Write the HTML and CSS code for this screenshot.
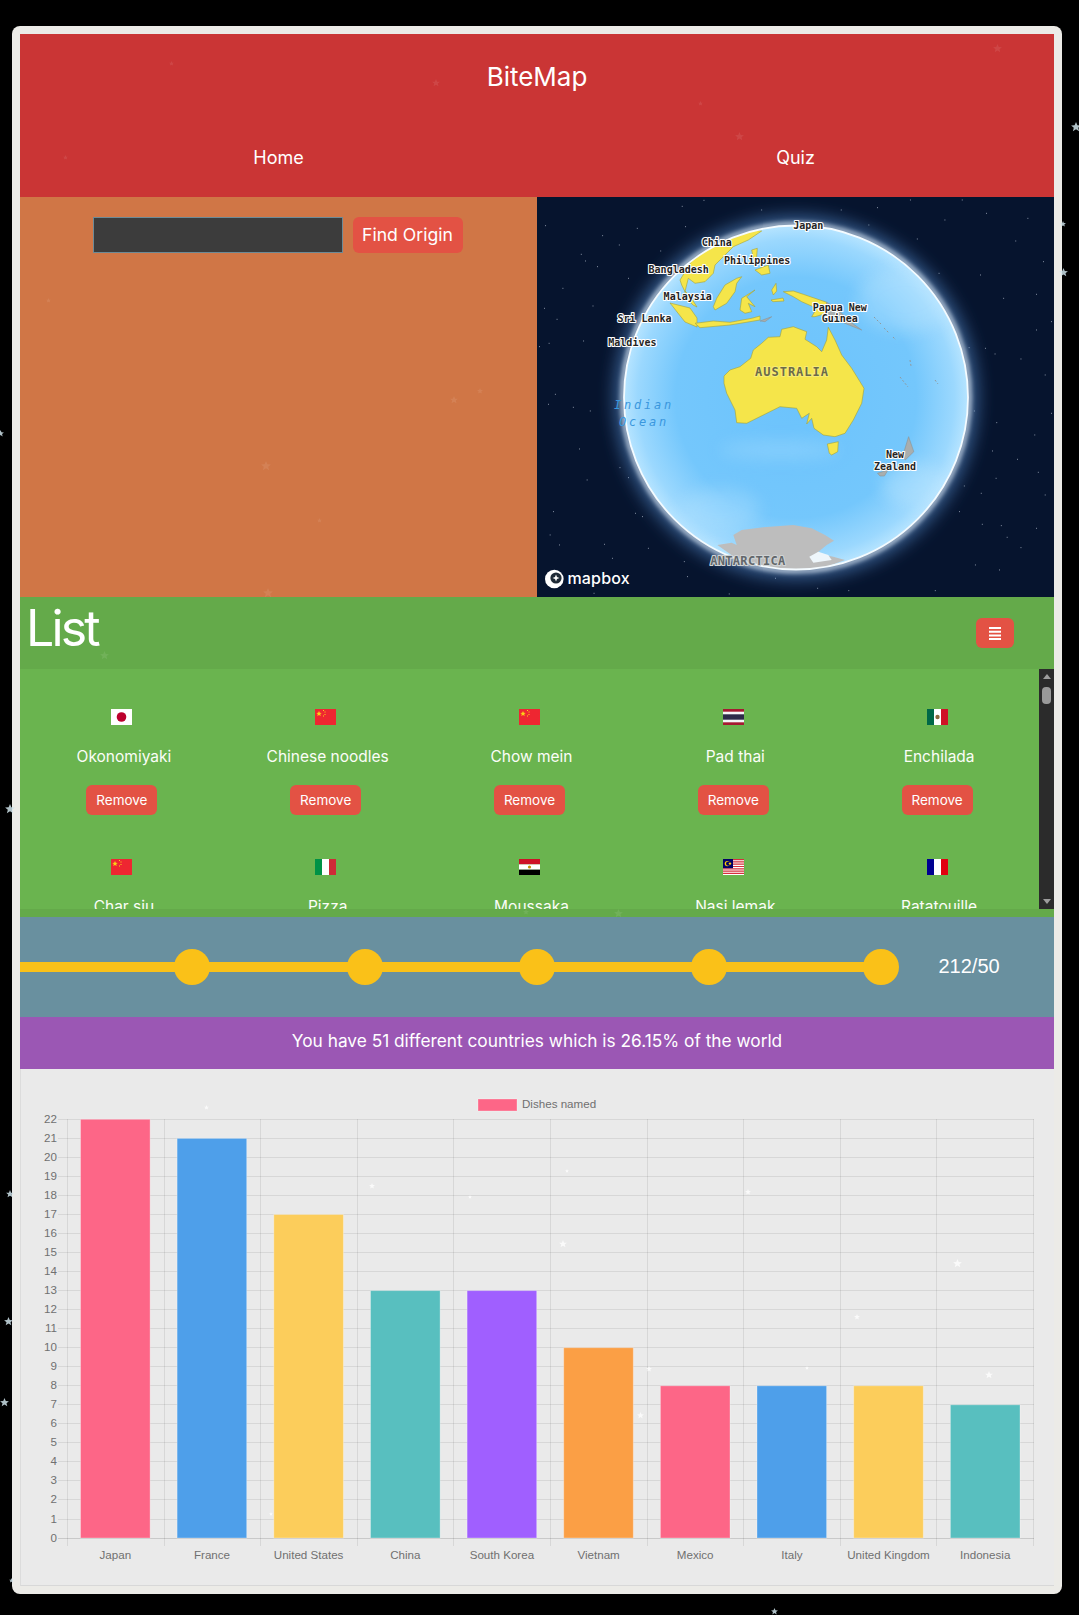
FILE: index.html
```html
<!DOCTYPE html>
<html lang="en">
<head>
<meta charset="utf-8">
<title>BiteMap</title>
<link rel="stylesheet" href="styles.css">
</head>
<body>
<svg class="defs" width="0" height="0" aria-hidden="true">
  <defs>
    <symbol id="f-jp" viewBox="0 0 21 16"><rect width="21" height="16" fill="#fff"/><circle cx="10.5" cy="8" r="4.8" fill="#bc002d"/></symbol>
    <symbol id="f-cn" viewBox="0 0 21 16"><rect width="21" height="16" fill="#ee2631"/><path d="M4 2l.8 1.8 1.9.1-1.5 1.2.5 1.9L4 6 2.300 7l.5-1.900L1.300 3.900l1.900-.1z" fill="#fcd116"/><path d="M8 1h1v1H8zM9.500 2.500h1v1h-1zM9.500 5h1v1h-1zM8 6.500h1v1H8z" fill="#fcd116"/></symbol>
    <symbol id="f-th" viewBox="0 0 21 16"><rect width="21" height="16" fill="#a51931"/><rect y="2.700" width="21" height="10.600" fill="#f4f5f8"/><rect y="5.300" width="21" height="5.400" fill="#2d2a4a"/></symbol>
    <symbol id="f-mx" viewBox="0 0 21 16"><rect width="7" height="16" fill="#006847"/><rect x="7" width="7" height="16" fill="#fff"/><rect x="14" width="7" height="16" fill="#ce1126"/><circle cx="10.500" cy="8" r="2.200" fill="#8c6a3f"/></symbol>
    <symbol id="f-it" viewBox="0 0 21 16"><rect width="7" height="16" fill="#009246"/><rect x="7" width="7" height="16" fill="#fff"/><rect x="14" width="7" height="16" fill="#ce2b37"/></symbol>
    <symbol id="f-eg" viewBox="0 0 21 16"><rect width="21" height="5.400" fill="#ce1126"/><rect y="5.400" width="21" height="5.300" fill="#fff"/><rect y="10.700" width="21" height="5.300" fill="#000"/><circle cx="10.500" cy="8" r="1.600" fill="#c09300"/></symbol>
    <symbol id="f-my" viewBox="0 0 21 16"><rect width="21" height="16" fill="#fff"/><path d="M0 0h21v1.200H0zM0 2.300h21v1.200H0zM0 4.600h21v1.200H0zM0 6.900h21v1.200H0zM0 9.200h21v1.200H0zM0 11.500h21v1.200H0zM0 13.800h21V15H0z" fill="#d5303e"/><rect width="10" height="9.200" fill="#010066"/><circle cx="4.300" cy="4.600" r="2.600" fill="#fc0"/><circle cx="5.200" cy="4.600" r="2.200" fill="#010066"/><circle cx="7" cy="4.600" r="1.200" fill="#fc0"/></symbol>
    <symbol id="f-fr" viewBox="0 0 21 16"><rect width="7" height="16" fill="#000091"/><rect x="7" width="7" height="16" fill="#fff"/><rect x="14" width="7" height="16" fill="#e1000f"/></symbol>
    <symbol id="star" viewBox="-5 -5 10 10"><path d="M0-5L1.400-1.700 4.900-1.500 2.200.7 3.100 4.200 0 2.300-3.100 4.200-2.200.7-4.900-1.500-1.400-1.700z"/></symbol>
  </defs>
</svg>

<main class="card">
  <header class="site-head">
    <h1 class="brand">BiteMap</h1>
    <nav class="nav">
      <a class="nav-link">Home</a>
      <a class="nav-link">Quiz</a>
    </nav>
  </header>

  <section class="explore">
    <div class="search-pane">
      <form class="search">
        <input class="search-input" type="text" aria-label="Dish">
        <button class="btn btn-find" type="button">Find Origin</button>
      </form>
    </div>
    <div class="map-pane">
      <svg class="map" viewBox="537 197 517 400" role="img" aria-label="Globe map">
        <defs>
          <radialGradient id="ocean" cx="50%" cy="50%" r="50%">
            <stop offset="0" stop-color="#6cc3fc"/>
            <stop offset="0.7" stop-color="#74c7fc"/>
            <stop offset="0.92" stop-color="#9bd8fe"/>
            <stop offset="1" stop-color="#b6e4ff"/>
          </radialGradient>
          <filter id="glow-wide" x="-30%" y="-30%" width="160%" height="160%"><feGaussianBlur stdDeviation="9"/></filter>
          <filter id="glow-near" x="-20%" y="-20%" width="140%" height="140%"><feGaussianBlur stdDeviation="2.500"/></filter>
          <filter id="soft" x="-50%" y="-50%" width="200%" height="200%"><feGaussianBlur stdDeviation="8"/></filter>
          <clipPath id="globe-clip"><circle cx="796" cy="397.500" r="172"/></clipPath>
        </defs>
        <rect x="537" y="197" width="517" height="400" fill="#06142e"/>
        <g transform="translate(537 195) scale(.3457 .3333)">
          <path class="stars" d="M25 92h0M75 280h0M140 198h0M175 215h0M265 250h0M22 340h0M58 373h0M162 333h0M135 438h0M35 445h0M7 455h0M53 598h0M33 628h0M105 637h0M154 648h0M123 762h0M145 855h0M240 818h0M265 848h0M48 950h0M285 955h0M305 965h0M38 1020h0M65 1050h0M195 1048h0M218 1090h0M322 1060h0M426 1100h0M435 1145h0M556 1197h0M165 1195h0M690 1150h0M812 1180h0M902 1187h0M1152 1187h0M1338 1125h0M1268 1110h0M1400 1058h0M1360 1027h0M1288 988h0M1343 992h0M1222 950h0M1285 895h0M1236 873h0M1450 832h0M1328 850h0M1318 768h0M1390 793h0M1488 655h0M1330 683h0M1265 648h0M1400 492h0M1297 460h0M1250 458h0M1325 477h0M1488 380h0M1445 298h0M1350 310h0M1385 138h0M1283 240h0M1163 235h0M1100 132h0M1080 15h0M960 90h0M985 38h0M1230 15h0M880 45h0M483 16h0M420 34h0M650 45h0M290 100h0M358 168h0M238 150h0M128 178h0M430 95h0M190 122h0M1180 75h0M1300 55h0M1420 70h0M1465 200h0M1445 405h0M1470 540h0M1440 720h0M1470 900h0M1445 1000h0"/>
        </g>
        <circle cx="796" cy="397.500" r="174" fill="none" stroke="#5d95d8" stroke-width="9" filter="url(#glow-wide)"/>
        <circle cx="796" cy="397.500" r="173.500" fill="none" stroke="#e8f4ff" stroke-width="3.500" filter="url(#glow-near)"/>
        <circle cx="796" cy="397.500" r="172" fill="url(#ocean)"/>
        <g clip-path="url(#globe-clip)">
          <g filter="url(#soft)" opacity="0.35">
            <ellipse cx="905" cy="300" rx="48" ry="32" fill="#bfe7ff"/>
            <ellipse cx="915" cy="485" rx="34" ry="22" fill="#c8ebff"/>
            <ellipse cx="720" cy="510" rx="40" ry="22" fill="#b6e3ff"/>
            <ellipse cx="780" cy="450" rx="60" ry="10" fill="#a9deff"/>
          </g>
          <path class="land" d="M724 376L730 370 740 366.700 750.700 358.300 753.300 350 761.700 343.300 768.300 337.300 780 336.700 781.700 329.300 793.300 326.700 806.700 331.700 805 339.300 816.700 346.700 821.700 351.700 826.700 340 828.300 327.300 835 340 841.700 355 851.700 368.300 860 381.700 864 388.300 861.700 403.300 853.300 420 845 433.300 835 436.700 823.300 435 814 428.300 811.700 418.300 806.700 424 809.300 413.300 801.700 418.300 796.700 408.300 780 406.700 763.300 415 746.700 423.300 736.700 422.700 735 410 726.700 393.300 724 383.300Z"/>
          <path class="land" d="M827.300 444L838.300 441.700 837.700 451.700 831.700 455 829.300 453.300Z"/>
          <path class="land" d="M680 280L693.300 258.300 710 246.700 730 235 751.700 230 761.700 231 748.300 240 733.300 246.700 723.300 256.700 715 265 713.300 273.300 705 281.700 695 283.300 688.300 278.300 685 291.700 681.700 285Z"/>
          <path class="land" d="M685 291L690 296 697 307 693 305 686 298Z"/>
          <path class="land" d="M713.300 306.700L716.700 298.300 725 285 736.700 278.300 741.700 276.700 736.700 283.300 735 291.700 726.700 303.300 715 310Z"/>
          <path class="land" d="M740 310L741.700 298.300 755 290 746.700 296.700 755 306.700 748.300 303.300 751.700 311.700 745 313.300Z"/>
          <path class="land" d="M751.700 250L757.300 248.300 756.700 256.700 760 261.700 753.300 258.300Z"/>
          <path class="land" d="M755 270L768.300 265 770 273.300 761.700 275Z"/>
          <path class="land" d="M670 303L690 308 697 318 697 327 685 322Z"/>
          <path class="land" d="M695 323.300L713.300 321 730 322.300 751.700 318.300 760 316 760 320 730 325 700 327.700Z"/>
          <path class="land" d="M771 300L783 298 784 301 773 301.700Z"/>
          <path class="land" d="M771.700 290L776 283.300 776.700 291 773.300 295Z"/>
          <path class="land" d="M783.300 291.700L793.300 291 803.300 294.300 826.700 302.300 826.700 313.300 815 316.700 811.700 316.700 816.700 308.300 801.700 301.700 793.300 296.700Z"/>
          <path class="land land-g" d="M826.700 302.300L836.700 308.300 850 321.700 861.700 330 853.300 326.700 845 323.300 826.700 313.300Z"/>
          <path class="land land-g" d="M760 321L771.700 316.700 765 321.700Z"/>
          <path class="land land-g" d="M908.600 436.700L913.800 451.700 905.200 460 903 455Z"/>
          <path class="land land-g" d="M877.500 473.300L888 470 884.400 476 880 476Z"/>
          <path class="isles" d="M874 317L881 324M884 328L889 333M893 337L896 340M900 377L908 387M910 360L911 366M935 380L938 384"/>
          <path class="ice" d="M717.300 545L731.700 542.700 736.700 545 733.300 535 741.700 530 763.300 527.300 793.300 525 811.700 528.300 825 535 834 540.700 826.700 545 816.700 553.300 833.300 556.700 845 560 826.700 566.700 800 572 766.700 572 743.300 563.300Z"/>
          <path class="snow" d="M809.300 556.700L818.300 551.700 828.300 555 831.700 560 813.300 562.700Z"/>
        </g>
        <circle cx="796" cy="397.500" r="172" fill="none" stroke="#f4fbff" stroke-width="1.800"/>
        <text class="ml" x="808.300" y="229.300">Japan</text>
        <text class="ml" x="716.700" y="245.700">China</text>
        <text class="ml" x="757.200" y="264.300">Philippines</text>
        <text class="ml" x="678.700" y="273.300">Bangladesh</text>
        <text class="ml" x="687.700" y="300">Malaysia</text>
        <text class="ml" x="839.800" y="310.700">Papua New</text>
        <text class="ml" x="839.800" y="322.300">Guinea</text>
        <text class="ml" x="644.500" y="322.300">Sri Lanka</text>
        <text class="ml" x="632.400" y="345.700">Maldives</text>
        <text class="ml" x="895" y="458.300">New</text>
        <text class="ml" x="895" y="470">Zealand</text>
        <text class="ml ml-country" x="792" y="376.300">AUSTRALIA</text>
        <text class="ml ml-ice" x="747.900" y="565.300">ANTARCTICA</text>
        <text class="ml-sea" x="644" y="409">Indian</text>
        <text class="ml-sea" x="644" y="425.700">Ocean</text>
        <circle cx="554.300" cy="579" r="9.300" fill="#fff"/>
        <circle cx="556" cy="578" r="5.600" fill="#1f2a36"/>
        <path d="M556 574.500l1 2.500 2.500 1-2.500 1-1 2.500-1-2.500-2.500-1 2.500-1z" fill="#fff"/>
        <text class="mapbox" x="567.400" y="584">mapbox</text>
      </svg>
    </div>
  </section>

  <section class="list-panel">
    <div class="list-head">
      <h2 class="list-title">List</h2>
      <button class="btn btn-menu" type="button" aria-label="Sort">
        <svg class="menu-icon" viewBox="0 0 12 13"><path d="M0 0h12v2H0zM0 3.700h12v2H0zM0 7.400h12v2H0zM0 11h12v2H0z" fill="#fff"/></svg>
      </button>
    </div>
    <div class="list-body">
      <div class="dish-grid">
        <article class="dish"><svg class="flag"><use href="#f-jp"/></svg><div class="dish-name">Okonomiyaki</div><button class="btn btn-remove" type="button">Remove</button></article>
        <article class="dish"><svg class="flag"><use href="#f-cn"/></svg><div class="dish-name">Chinese noodles</div><button class="btn btn-remove" type="button">Remove</button></article>
        <article class="dish"><svg class="flag"><use href="#f-cn"/></svg><div class="dish-name">Chow mein</div><button class="btn btn-remove" type="button">Remove</button></article>
        <article class="dish"><svg class="flag"><use href="#f-th"/></svg><div class="dish-name">Pad thai</div><button class="btn btn-remove" type="button">Remove</button></article>
        <article class="dish"><svg class="flag"><use href="#f-mx"/></svg><div class="dish-name">Enchilada</div><button class="btn btn-remove" type="button">Remove</button></article>
        <article class="dish"><svg class="flag"><use href="#f-cn"/></svg><div class="dish-name">Char siu</div><button class="btn btn-remove" type="button">Remove</button></article>
        <article class="dish"><svg class="flag"><use href="#f-it"/></svg><div class="dish-name">Pizza</div><button class="btn btn-remove" type="button">Remove</button></article>
        <article class="dish"><svg class="flag"><use href="#f-eg"/></svg><div class="dish-name">Moussaka</div><button class="btn btn-remove" type="button">Remove</button></article>
        <article class="dish"><svg class="flag"><use href="#f-my"/></svg><div class="dish-name">Nasi lemak</div><button class="btn btn-remove" type="button">Remove</button></article>
        <article class="dish"><svg class="flag"><use href="#f-fr"/></svg><div class="dish-name">Ratatouille</div><button class="btn btn-remove" type="button">Remove</button></article>
      </div>
      <div class="scrollbar" aria-hidden="true">
        <span class="arrow arrow-up"></span>
        <span class="thumb"></span>
        <span class="arrow arrow-down"></span>
      </div>
    </div>
    <div class="list-foot"></div>
  </section>

  <section class="progress">
    <div class="track">
      <div class="step"><span class="dot"></span></div>
      <div class="step"><span class="dot"></span></div>
      <div class="step"><span class="dot"></span></div>
      <div class="step"><span class="dot"></span></div>
      <div class="step"><span class="dot"></span></div>
    </div>
    <div class="progress-count">212/50</div>
  </section>

  <section class="summary">You have 51 different countries which is 26.15% of the world</section>

  <section class="chart-panel">
    <svg class="chart" viewBox="20 1069 1034 517" role="img" aria-label="Dishes named per country">
      <path class="grid" d="M58 1119.500H1034M58 1138.500H1034M58 1157.500H1034M58 1176.500H1034M58 1195.500H1034M58 1214.500H1034M58 1233.500H1034M58 1252.500H1034M58 1271.500H1034M58 1290.500H1034M58 1309.500H1034M58 1328.500H1034M58 1347.500H1034M58 1366.500H1034M58 1385.500H1034M58 1404.500H1034M58 1423.500H1034M58 1442.500H1034M58 1461.500H1034M58 1480.500H1034M58 1499.500H1034M58 1519.500H1034"/>
      <path class="grid" d="M67.500 1119V1546M164.500 1119V1546M260.500 1119V1546M357.500 1119V1546M453.500 1119V1546M550.500 1119V1546M647.500 1119V1546M743.500 1119V1546M840.500 1119V1546M936.500 1119V1546M1033.500 1119V1546"/>
      <path class="axis" d="M58 1538.500H1034"/>
      <rect class="bar" x="80.500" y="1119.300" width="69.600" height="418.700" fill="#fd6687"/>
      <rect class="bar" x="177.100" y="1138.400" width="69.600" height="399.600" fill="#4e9fea"/>
      <rect class="bar" x="273.800" y="1214.500" width="69.600" height="323.500" fill="#fccd5b"/>
      <rect class="bar" x="370.500" y="1290.600" width="69.600" height="247.400" fill="#58bfbf"/>
      <rect class="bar" x="467.100" y="1290.600" width="69.600" height="247.400" fill="#a05fff"/>
      <rect class="bar" x="563.700" y="1347.700" width="69.600" height="190.300" fill="#fb9f45"/>
      <rect class="bar" x="660.400" y="1385.800" width="69.600" height="152.200" fill="#fd6687"/>
      <rect class="bar" x="757" y="1385.800" width="69.600" height="152.200" fill="#4e9fea"/>
      <rect class="bar" x="853.700" y="1385.800" width="69.600" height="152.200" fill="#fccd5b"/>
      <rect class="bar" x="950.400" y="1404.800" width="69.600" height="133.200" fill="#58bfbf"/>
      <rect class="bar" x="478" y="1099" width="39" height="12" fill="#fd6687"/>
      <text class="tick" x="522" y="1107.500">Dishes named</text>
      <g class="y-ticks">
        <text x="57" y="1123">22</text><text x="57" y="1142">21</text><text x="57" y="1161">20</text><text x="57" y="1180">19</text><text x="57" y="1199">18</text><text x="57" y="1218">17</text><text x="57" y="1237">16</text><text x="57" y="1256">15</text><text x="57" y="1275">14</text><text x="57" y="1294">13</text><text x="57" y="1313">12</text><text x="57" y="1332">11</text><text x="57" y="1351">10</text><text x="57" y="1370">9</text><text x="57" y="1389">8</text><text x="57" y="1408">7</text><text x="57" y="1427">6</text><text x="57" y="1446">5</text><text x="57" y="1465">4</text><text x="57" y="1484">3</text><text x="57" y="1503">2</text><text x="57" y="1523">1</text><text x="57" y="1542">0</text>
      </g>
      <g class="x-ticks">
        <text x="115.300" y="1558.500">Japan</text><text x="212" y="1558.500">France</text><text x="308.600" y="1558.500">United States</text><text x="405.300" y="1558.500">China</text><text x="501.900" y="1558.500">South Korea</text><text x="598.600" y="1558.500">Vietnam</text><text x="695.200" y="1558.500">Mexico</text><text x="791.900" y="1558.500">Italy</text><text x="888.500" y="1558.500">United Kingdom</text><text x="985.200" y="1558.500">Indonesia</text>
      </g>
    </svg>
  </section>
</main>

<svg class="star-field" viewBox="0 0 1079 1615" aria-hidden="true">
  <g class="faint">
    <use href="#star" x="169" y="61" width="5" height="5"/><use href="#star" x="432" y="79" width="8" height="8"/><use href="#star" x="993" y="44" width="9" height="9"/><use href="#star" x="698" y="101" width="5" height="5"/><use href="#star" x="735" y="132" width="9" height="9"/><use href="#star" x="63" y="155" width="5" height="5"/>
    <use href="#star" x="261" y="461" width="10" height="10"/><use href="#star" x="450" y="396" width="8" height="8"/><use href="#star" x="477" y="388" width="6" height="6"/><use href="#star" x="317" y="518" width="5" height="5"/><use href="#star" x="263" y="588" width="10" height="10"/><use href="#star" x="46" y="298" width="5" height="5"/>
    <use href="#star" x="100" y="651" width="9" height="9"/><use href="#star" x="614" y="909" width="9" height="9"/><use href="#star" x="523" y="909" width="6" height="6"/>
  </g>
  <g class="bright">
    <use href="#star" x="204" y="1105" width="5" height="5"/><use href="#star" x="369" y="1183" width="6" height="6"/><use href="#star" x="468" y="1195" width="4" height="4"/><use href="#star" x="559" y="1240" width="8" height="8"/><use href="#star" x="745" y="1189" width="6" height="6"/><use href="#star" x="953" y="1259" width="9" height="9"/><use href="#star" x="854" y="1314" width="6" height="6"/><use href="#star" x="985" y="1371" width="8" height="8"/><use href="#star" x="646" y="1366" width="6" height="6"/><use href="#star" x="637" y="1412" width="7" height="7"/><use href="#star" x="805" y="1366" width="4" height="4"/><use href="#star" x="565" y="1169" width="4" height="4"/><use href="#star" x="269" y="1512" width="4" height="4"/>
  </g>
  <g class="edge">
    <use href="#star" x="1071" y="122" width="10" height="10"/><use href="#star" x="1060" y="221" width="6" height="6"/><use href="#star" x="1059" y="268" width="9" height="9"/><use href="#star" x="-3" y="430" width="7" height="7"/><use href="#star" x="5" y="804" width="10" height="10"/><use href="#star" x="6" y="1190" width="8" height="8"/><use href="#star" x="4" y="1317" width="9" height="9"/><use href="#star" x="0" y="1398" width="9" height="9"/><use href="#star" x="771" y="1608" width="7" height="7"/><use href="#star" x="9" y="1578" width="5" height="5"/>
  </g>
</svg>
</body>
</html>
```

FILE: styles.css
```css
* { box-sizing: border-box; }

html, body {
  margin: 0;
  padding: 0;
}

body {
  position: relative;
  width: 1079px;
  height: 1615px;
  overflow: hidden;
  background: #000;
  color: #fff;
  font-family: Inter, "Noto Sans", sans-serif;
}

.defs { position: absolute; }

.card {
  width: 1050px;
  margin: 26px 0 0 12px;
  padding: 8px;
  border-radius: 8px;
  background: #ecebe7;
}

.site-head { background: #ca3535; height: 163px; }

.brand {
  margin: 0;
  height: 84px;
  padding-top: 1px;
  display: flex;
  align-items: center;
  justify-content: center;
  font-size: 26px;
  font-weight: 400;
}

.nav {
  display: grid;
  grid-template-columns: 1fr 1fr;
  height: 79px;
}

.nav-link {
  display: flex;
  align-items: center;
  justify-content: center;
  font-size: 18px;
}

.explore {
  display: grid;
  grid-template-columns: 1fr 1fr;
  height: 400px;
}

.search-pane { background: #d07646; padding: 20px 2px 0 0; }

.search {
  display: flex;
  justify-content: center;
  gap: 10px;
}

.search-input {
  width: 250px;
  height: 36px;
  background: #3c3c3c;
  border: 1px solid #6d8a96;
  padding: 0 6px;
}

.btn {
  border: 0;
  border-radius: 6px;
  background: #e35244;
  color: #fff;
  font-family: inherit;
}

.btn-find { width: 110px; height: 36px; padding: 0 0 2px; font-size: 17.600px; }

.map-pane { height: 400px; }
.map { display: block; width: 100%; height: 100%; }

.stars { fill: none; stroke: #dfe7f4; stroke-width: 2.600; stroke-linecap: round; opacity: 0.85; }
.land { fill: #f5e54a; stroke: #a5a238; stroke-width: 0.600; stroke-linejoin: round; }
.land-g { fill: #a9aeae; stroke: #8d9494; }
.isles { fill: none; stroke: #8f9a9f; stroke-width: 1; stroke-dasharray: 2 2; }
.ice { fill: #bdbdbd; }
.snow { fill: #eef6fb; }

.ml {
  font-family: "DejaVu Sans Mono", monospace;
  font-size: 10px;
  font-weight: 700;
  text-anchor: middle;
  fill: #242424;
  stroke: #fff;
  stroke-width: 2.200px;
  stroke-linejoin: round;
  paint-order: stroke;
}

.ml-country { font-size: 12px; letter-spacing: 1px; fill: #6b6a4a; stroke: #f7ec72; }
.ml-ice { font-size: 12px; letter-spacing: 0.300px; fill: #62676b; stroke: #d0d3d4; }

.ml-sea {
  font-family: "DejaVu Sans Mono", monospace;
  font-size: 12px;
  font-style: italic;
  letter-spacing: 2.800px;
  text-anchor: middle;
  fill: #3a97dd;
}

.mapbox {
  font-family: Inter, sans-serif;
  font-size: 16px;
  font-weight: 500;
  letter-spacing: 0.200px;
  fill: #fff;
}

.list-panel { background: #64aa4a; }

.list-head {
  height: 72px;
  padding: 0 40px 0 6px;
  display: flex;
  align-items: center;
  justify-content: space-between;
}

.list-title {
  margin: 0 0 10px;
  font-size: 50px;
  font-weight: 400;
  letter-spacing: -2.800px;
  line-height: 60px;
}

.btn-menu {
  width: 38px;
  height: 30px;
  padding: 0;
  display: flex;
  align-items: center;
  justify-content: center;
}

.menu-icon { width: 12px; height: 13px; display: block; }

.list-body {
  display: flex;
  height: 240px;
  overflow: hidden;
  background: #6ab44f;
}

.dish-grid {
  flex: 1;
  display: grid;
  grid-template-columns: repeat(5, 1fr);
  grid-auto-rows: 150px;
}

.dish {
  display: flex;
  flex-direction: column;
  align-items: center;
  padding: 40px 0 4px;
}

.flag { width: 21px; height: 16px; display: block; flex: none; }

.dish-name {
  margin-top: 20px;
  padding-left: 4px;
  font-size: 15.500px;
  line-height: 24px;
  color: #fbfdf8;
}

.btn-remove {
  margin-top: 16px;
  width: 71px;
  height: 30px;
  padding: 0;
  font-size: 13.500px;
}

.scrollbar {
  flex: none;
  width: 15px;
  display: flex;
  flex-direction: column;
  align-items: center;
  background: #2b2b2b;
  padding: 5px 0;
}

.arrow { width: 0; height: 0; border-left: 4.500px solid transparent; border-right: 4.500px solid transparent; }
.arrow-up { border-bottom: 5px solid #9d9d9d; }
.arrow-down { margin-top: auto; border-top: 5px solid #9d9d9d; }

.thumb {
  width: 9px;
  height: 17px;
  margin-top: 8px;
  border-radius: 4px;
  background: #9a9a9a;
}

.list-foot { height: 8px; }

.progress {
  height: 100px;
  display: flex;
  align-items: center;
  background: #69909f;
}

.track { display: flex; align-items: center; }

.step {
  width: 172.300px;
  height: 10px;
  background: #fac118;
  display: flex;
  align-items: center;
  justify-content: flex-end;
}

.dot {
  width: 36px;
  height: 36px;
  flex: none;
  margin-right: -18px;
  border-radius: 50%;
  background: #fac118;
}

.progress-count {
  margin: 0 0 2px 57px;
  font-family: "Liberation Sans", Arial, sans-serif;
  font-size: 20px;
}

.summary {
  height: 52px;
  padding-bottom: 5px;
  display: flex;
  align-items: center;
  justify-content: center;
  background: #9b57b4;
  font-size: 17.300px;
}

.chart-panel {
  height: 517px;
  background: #eaeaea;
  border-left: 1px solid #dcdcdc;
  border-bottom: 1px solid #d8d8d8;
}

.chart { display: block; width: 1034px; height: 517px; margin-left: -1px; }

.grid { fill: none; stroke: rgba(0, 0, 0, 0.08); stroke-width: 1; }
.axis { fill: none; stroke: rgba(0, 0, 0, 0.14); stroke-width: 1; }
.bar { stroke: rgba(255, 255, 255, 0.3); stroke-width: 1; }

.tick, .y-ticks, .x-ticks {
  font-family: "Liberation Sans", Arial, sans-serif;
  font-size: 11.600px;
  fill: #707070;
}

.y-ticks { text-anchor: end; }
.x-ticks { text-anchor: middle; }

.star-field {
  position: absolute;
  left: 0;
  top: 0;
  width: 1079px;
  height: 1615px;
  pointer-events: none;
}

.faint { fill: #fff; opacity: 0.09; }
.bright { fill: #fff; opacity: 0.75; }
.edge { fill: #cfe3ea; opacity: 0.85; }
```
